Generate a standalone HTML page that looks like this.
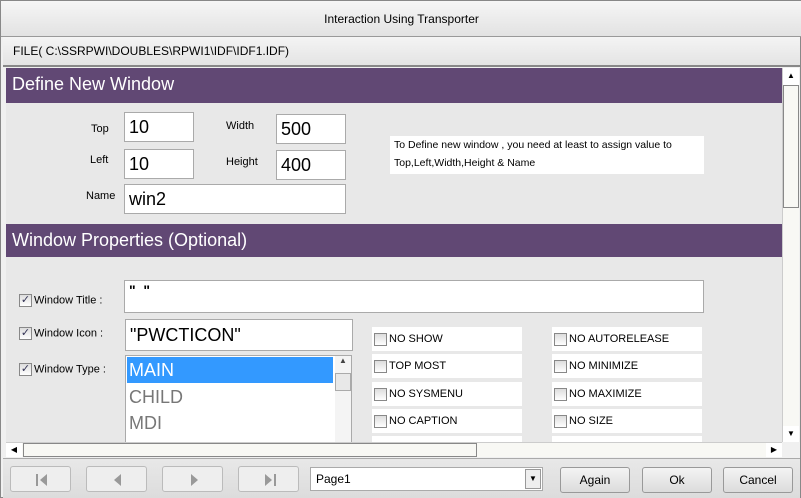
<!DOCTYPE html>
<html><head><style>
*{box-sizing:border-box;margin:0;padding:0}
body{width:801px;height:498px;background:#f0f0f0;font-family:"Liberation Sans",sans-serif;position:relative;overflow:hidden;border:1px solid #888}
.a{position:absolute}
.hdr{background:#614874;color:#fff;font-size:18px;padding-left:6px;line-height:32px}
.lbl{font-size:11px;color:#000}
.in{background:#fff;border:1px solid #aaa;font-size:18px;padding-left:4px;line-height:28px}
.cb{width:13px;height:13px;border:1px solid #888;background:linear-gradient(#ddd,#fff);display:inline-block;vertical-align:middle;margin-right:2px;font-size:11px;line-height:11px;text-align:center;color:#335}
.opt{background:#fff;font-size:11px;height:24px;line-height:24px;padding-left:2px;width:150px}
.btn{border:1px solid #999;border-radius:3px;background:linear-gradient(#f4f4f4,#dcdcdc);font-size:12px;text-align:center;line-height:24px;height:26px}
.nav{border:1px solid #bbb;border-radius:3px;background:#eee;height:26px;width:61px}
.nav svg{position:absolute;left:24px;top:6px}
</style></head><body>
<div class="a" style="left:0;top:0;width:801px;height:36px;background:linear-gradient(#f6f6f6,#e2e2e2);border-bottom:1px solid #999;text-align:center;font-size:12px;line-height:36px">Interaction Using Transporter</div>
<div class="a" style="left:2px;top:36px;width:797px;height:30px;background:linear-gradient(#f4f4f4,#e4e4e4);font-size:12px;line-height:28px;padding-left:10px;border-bottom:2px solid #888">FILE( C:\SSRPWI\DOUBLES\RPWI1\IDF\IDF1.IDF)</div>
<div class="a" style="left:5px;top:67px;width:776px;height:374px;background:#e8e8e8;overflow:hidden">
 <div class="a hdr" style="left:0;top:0;width:776px;height:35px">Define New Window</div>
 <div class="a lbl" style="left:85px;top:55px">Top</div>
 <div class="a in" style="left:118px;top:44px;width:70px;height:30px">10</div>
 <div class="a lbl" style="left:220px;top:52px">Width</div>
 <div class="a in" style="left:270px;top:46px;width:70px;height:30px">500</div>
 <div class="a lbl" style="left:84px;top:86px">Left</div>
 <div class="a in" style="left:118px;top:81px;width:70px;height:30px">10</div>
 <div class="a lbl" style="left:220px;top:88px">Height</div>
 <div class="a in" style="left:270px;top:82px;width:70px;height:30px">400</div>
 <div class="a lbl" style="left:80px;top:122px">Name</div>
 <div class="a in" style="left:118px;top:116px;width:222px;height:30px">win2</div>
 <div class="a" style="left:384px;top:68px;width:314px;height:38px;background:#fff;font-size:10.5px;line-height:18px;padding-left:4px">To Define new window , you need at least to assign value to<br>Top,Left,Width,Height &amp; Name</div>
 <div class="a hdr" style="left:0;top:156px;width:776px;height:33px">Window Properties (Optional)</div>
 <div class="a lbl" style="left:13px;top:226px"><span class="cb">✓</span>Window Title :</div>
 <div class="a in" style="left:118px;top:212px;width:580px;height:33px;line-height:18px;font-size:14px;font-weight:bold">"&nbsp; "</div>
 <div class="a lbl" style="left:13px;top:259px"><span class="cb">✓</span>Window Icon :</div>
 <div class="a in" style="left:119px;top:251px;width:228px;height:32px;line-height:30px">"PWCTICON"</div>
 <div class="a lbl" style="left:13px;top:295px"><span class="cb">✓</span>Window Type :</div>
 <div class="a" style="left:119px;top:287px;width:227px;height:100px;background:#fff;border:1px solid #aaa;font-size:18px;color:#777">
  <div style="background:#3399ff;color:#fff;height:26px;line-height:26px;margin:1px;width:206px;padding-left:2px">MAIN</div>
  <div style="line-height:26px;padding-left:3px">CHILD</div>
  <div style="line-height:26px;padding-left:3px">MDI</div>
  <div class="a" style="right:0;top:0;width:16px;height:100px;background:#f4f4f4;font-size:8px;color:#444;text-align:center">▲<div style="margin-top:8px;height:18px;border:1px solid #aaa;background:#e8e8e8"></div></div>
 </div>
 <div class="a" style="left:366px;top:259px">
  <div class="opt"><span class="cb"></span>NO SHOW</div><div class="opt" style="margin-top:3px"><span class="cb"></span>TOP MOST</div><div class="opt" style="margin-top:4px"><span class="cb"></span>NO SYSMENU</div><div class="opt" style="margin-top:3px"><span class="cb"></span>NO CAPTION</div><div class="opt" style="margin-top:3px"></div>
 </div>
 <div class="a" style="left:546px;top:259px">
  <div class="opt"><span class="cb"></span>NO AUTORELEASE</div><div class="opt" style="margin-top:3px"><span class="cb"></span>NO MINIMIZE</div><div class="opt" style="margin-top:4px"><span class="cb"></span>NO MAXIMIZE</div><div class="opt" style="margin-top:3px"><span class="cb"></span>NO SIZE</div><div class="opt" style="margin-top:3px"></div>
 </div>
</div>
<div class="a" style="left:781px;top:67px;width:17px;height:374px;background:#f8f8f4;border-left:1px solid #ccc">
 <div style="height:17px;background:#fff;font-size:8px;text-align:center;line-height:16px">▲</div>
 <div style="height:123px;border:1px solid #888;background:#f8f8f4"></div>
 <div class="a" style="bottom:0;left:0;width:16px;height:16px;background:#fff;font-size:8px;text-align:center;line-height:16px">▼</div>
</div>
<div class="a" style="left:5px;top:441px;width:776px;height:15px;background:#f8f8f4;border-top:1px solid #ccc">
 <div class="a" style="left:0;top:0;width:16px;height:14px;background:#fff;font-size:8px;line-height:14px;text-align:center">◀</div>
 <div class="a" style="left:17px;top:0;width:454px;height:14px;border:1px solid #888;background:#f8f8f4"></div>
 <div class="a" style="right:0;top:0;width:16px;height:14px;background:#fff;font-size:8px;line-height:14px;text-align:center">▶</div>
</div>
<div class="a" style="left:2px;top:457px;width:797px;height:40px;background:linear-gradient(#e8e8e8,#dcdcdc);border-top:1px solid #aaa"></div>
<div class="a nav" style="left:9px;top:465px"><svg width="14" height="14"><rect x="1" y="1" width="2" height="12" fill="#999"/><path d="M12 1L5 7L12 13Z" fill="#999"/></svg></div>
<div class="a nav" style="left:85px;top:465px"><svg width="14" height="14"><path d="M10 1L3 7L10 13Z" fill="#999"/></svg></div>
<div class="a nav" style="left:161px;top:465px"><svg width="14" height="14"><path d="M4 1L11 7L4 13Z" fill="#999"/></svg></div>
<div class="a nav" style="left:237px;top:465px"><svg width="14" height="14"><path d="M2 1L9 7L2 13Z" fill="#999"/><rect x="11" y="1" width="2" height="12" fill="#999"/></svg></div>
<div class="a" style="left:309px;top:466px;width:233px;height:24px;background:#fff;border:1px solid #aaa;font-size:12px;line-height:22px;padding-left:5px">Page1<div class="a" style="right:1px;top:1px;width:16px;height:20px;border:1px solid #999;background:#eee;font-size:8px;text-align:center;line-height:18px">▼</div></div>
<div class="a btn" style="left:559px;top:466px;width:70px">Again</div>
<div class="a btn" style="left:641px;top:466px;width:70px">Ok</div>
<div class="a btn" style="left:722px;top:466px;width:70px">Cancel</div>
</body></html>
